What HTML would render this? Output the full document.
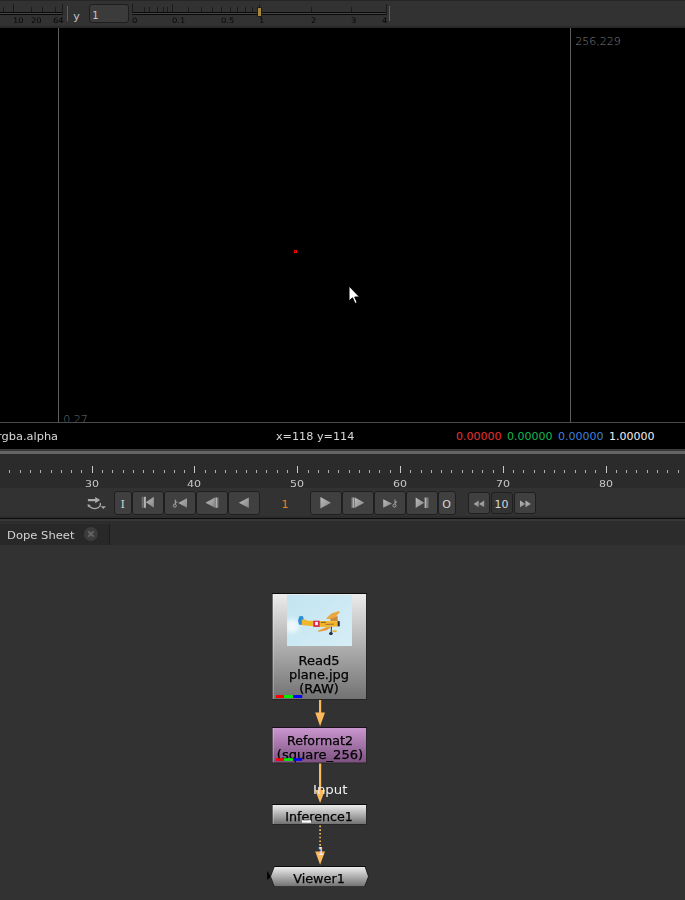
<!DOCTYPE html>
<html><head><meta charset="utf-8"><title>Nuke</title>
<style>
html,body{margin:0;padding:0;background:#323232;}
body{width:685px;height:900px;overflow:hidden;position:relative;font-family:"DejaVu Sans","Liberation Sans",sans-serif;color:#c8c8c8;}
.a{position:absolute;}
.t{position:absolute;white-space:nowrap;line-height:1;}
#top{left:0;top:0;width:685px;height:28px;background:#323232;}
#viewer{left:0;top:28px;width:685px;height:421px;background:#000;}
#tl{left:0;top:449px;width:685px;height:69px;background:#2b2b2b;}
#ng{left:0;top:545px;width:685px;height:355px;background:#323232;}
.btn{position:absolute;top:491px;height:24px;background:#404040;border:1px solid #1f1f1f;border-radius:3px;box-sizing:border-box;}
.tk{position:absolute;background:#1c1c1c;width:1px;}
</style></head><body>

<div class="a" id="top"></div>
<div class="a" style="left:0;top:0;width:685px;height:1px;background:#262626"></div>
<div class="a" style="left:0;top:26px;width:685px;height:2px;background:#282828"></div>
<div class="a" style="left:0px;top:12px;width:63px;height:3px;background:#444;border-top:1px solid #0a0a0a;border-bottom:1px solid #0a0a0a;box-sizing:border-box"></div>
<div class="tk" style="left:3px;top:7px;height:5px"></div>
<div class="tk" style="left:13px;top:4px;height:8px"></div>
<div class="tk" style="left:31px;top:7px;height:5px"></div>
<div class="tk" style="left:42px;top:7px;height:5px"></div>
<div class="tk" style="left:55px;top:7px;height:5px"></div>
<div class="tk" style="left:62px;top:4px;height:8px"></div>
<div class="tk" style="left:62px;top:4px;height:11px"></div>
<div class="t" style="left:13.0px;font-size:7.5px;color:#060606;top:16.6px;transform-origin:0 50%;transform:scaleX(1.12);">10</div>
<div class="t" style="left:31.0px;font-size:7.5px;color:#060606;top:16.6px;transform-origin:0 50%;transform:scaleX(1.12);">20</div>
<div class="t" style="left:52.6px;font-size:7.5px;color:#060606;top:16.6px;transform-origin:0 50%;transform:scaleX(1.12);">64</div>
<div class="a" style="left:67px;top:6px;width:1px;height:15px;background:#5e5e5e"></div>
<div class="t" style="left:73.2px;top:11.1px;font-size:11px;color:#c8c8c8">y</div>
<div class="a" style="left:89px;top:4px;width:40px;height:19px;background:#3b3b3b;border:1px solid #1e1e1e;border-radius:3px;box-sizing:border-box"></div>
<div class="t" style="left:92.3px;top:10.5px;font-size:10px;color:#c8c8c8">1</div>
<div class="a" style="left:132px;top:12px;width:255px;height:3px;background:#444;border-top:1px solid #0a0a0a;border-bottom:1px solid #0a0a0a;box-sizing:border-box"></div>
<div class="tk" style="left:132px;top:4px;height:8px"></div>
<div class="tk" style="left:172px;top:4px;height:8px"></div>
<div class="tk" style="left:259px;top:4px;height:8px"></div>
<div class="tk" style="left:386px;top:4px;height:11px"></div>
<div class="tk" style="left:144px;top:7px;height:5px"></div>
<div class="tk" style="left:149px;top:7px;height:5px"></div>
<div class="tk" style="left:157px;top:7px;height:5px"></div>
<div class="tk" style="left:163px;top:7px;height:5px"></div>
<div class="tk" style="left:167px;top:7px;height:5px"></div>
<div class="tk" style="left:188px;top:7px;height:5px"></div>
<div class="tk" style="left:201px;top:7px;height:5px"></div>
<div class="tk" style="left:212px;top:7px;height:5px"></div>
<div class="tk" style="left:221px;top:7px;height:5px"></div>
<div class="tk" style="left:230px;top:7px;height:5px"></div>
<div class="tk" style="left:237px;top:7px;height:5px"></div>
<div class="tk" style="left:245px;top:7px;height:5px"></div>
<div class="tk" style="left:252px;top:7px;height:5px"></div>
<div class="tk" style="left:311px;top:7px;height:5px"></div>
<div class="tk" style="left:351px;top:7px;height:5px"></div>
<div class="t" style="left:132.3px;font-size:7.5px;color:#060606;top:16.6px;transform-origin:0 50%;transform:scaleX(1.12);">0</div>
<div class="t" style="left:172.3px;font-size:7.5px;color:#060606;top:16.6px;transform-origin:0 50%;transform:scaleX(1.12);">0.1</div>
<div class="t" style="left:221.2px;font-size:7.5px;color:#060606;top:16.6px;transform-origin:0 50%;transform:scaleX(1.12);">0.5</div>
<div class="t" style="left:259.2px;font-size:7.5px;color:#060606;top:16.6px;transform-origin:0 50%;transform:scaleX(1.12);">1</div>
<div class="t" style="left:311.2px;font-size:7.5px;color:#060606;top:16.6px;transform-origin:0 50%;transform:scaleX(1.12);">2</div>
<div class="t" style="left:351.2px;font-size:7.5px;color:#060606;top:16.6px;transform-origin:0 50%;transform:scaleX(1.12);">3</div>
<div class="t" style="left:381.6px;font-size:7.5px;color:#060606;top:16.6px;transform-origin:0 50%;transform:scaleX(1.12);">4</div>
<div class="a" style="left:257px;top:7px;width:5px;height:10px;background:#a3873a;border:1px solid #1e1e1e;box-sizing:border-box"></div>
<div class="a" style="left:389px;top:6px;width:1px;height:15px;background:#5e5e5e"></div>
<div class="a" id="viewer"></div>
<div class="a" style="left:58px;top:28px;width:1px;height:394px;background:#5e5e5e"></div>
<div class="a" style="left:570px;top:28px;width:1px;height:394px;background:#5e5e5e"></div>
<div class="a" style="left:0;top:422px;width:685px;height:1px;background:#4a4a4a"></div>
<div class="t" style="left:575.3px;top:35.6px;font-size:11px;color:#808080;font-weight:200;font-family:'DejaVu Sans Light','DejaVu Sans',sans-serif">256,229</div>
<div class="t" style="left:63.2px;top:413.8px;font-size:11px;color:#767676;font-weight:200;font-family:'DejaVu Sans Light','DejaVu Sans',sans-serif;height:8.2px;overflow:hidden">0.27</div>
<div class="a" style="left:293.6px;top:249.6px;width:3.6px;height:3.6px;border:1.2px solid #f00;box-sizing:border-box"></div>
<svg class="a" style="left:346px;top:284px" width="16" height="22" viewBox="0 0 16 22"><path d="M3 2 L3 17 L6.5 13.8 L9 19.5 L11.2 18.5 L8.7 13 L13.5 13 Z" fill="#fff" stroke="#000" stroke-width="1"/></svg>
<div class="t" style="left:-3px;top:431px;font-size:11px;color:#d8d8d8;transform-origin:0 50%;transform:scaleX(1.035)">rgba.alpha</div>
<div class="t" style="left:276px;top:431px;font-size:11px;color:#d8d8d8;transform-origin:0 50%;transform:scaleX(1.017)">x=118 y=114</div>
<div class="t" style="left:456px;top:431px;font-size:11px;color:#e83232">0.00000</div>
<div class="t" style="left:507px;top:431px;font-size:11px;color:#14b850">0.00000</div>
<div class="t" style="left:558px;top:431px;font-size:11px;color:#3f80dc">0.00000</div>
<div class="t" style="left:609px;top:431px;font-size:11px;color:#f0f0f0">1.00000</div>
<div class="a" id="tl"></div>
<div class="a" style="left:0;top:449px;width:685px;height:2px;background:#3a3a3a"></div>
<div class="a" style="left:0;top:451px;width:685px;height:3px;background:#646464"></div>
<div class="a" style="left:0;top:488px;width:685px;height:30px;background:#323232"></div>
<div class="a" style="left:-1px;top:470px;width:1px;height:3px;background:#b0b0b0"></div>
<div class="a" style="left:9px;top:470px;width:1px;height:3px;background:#b0b0b0"></div>
<div class="a" style="left:20px;top:470px;width:1px;height:3px;background:#b0b0b0"></div>
<div class="a" style="left:30px;top:470px;width:1px;height:3px;background:#b0b0b0"></div>
<div class="a" style="left:40px;top:470px;width:1px;height:3px;background:#b0b0b0"></div>
<div class="a" style="left:51px;top:470px;width:1px;height:3px;background:#b0b0b0"></div>
<div class="a" style="left:61px;top:470px;width:1px;height:3px;background:#b0b0b0"></div>
<div class="a" style="left:71px;top:470px;width:1px;height:3px;background:#b0b0b0"></div>
<div class="a" style="left:81px;top:470px;width:1px;height:3px;background:#b0b0b0"></div>
<div class="a" style="left:92px;top:466px;width:1px;height:7px;background:#c8c8c8"></div>
<div class="t" style="left:77.2px;width:30px;text-align:center;top:479px;font-size:9.2px;color:#c8c8c8;transform:scaleX(1.2)">30</div>
<div class="a" style="left:102px;top:470px;width:1px;height:3px;background:#b0b0b0"></div>
<div class="a" style="left:112px;top:470px;width:1px;height:3px;background:#b0b0b0"></div>
<div class="a" style="left:123px;top:470px;width:1px;height:3px;background:#b0b0b0"></div>
<div class="a" style="left:133px;top:470px;width:1px;height:3px;background:#b0b0b0"></div>
<div class="a" style="left:143px;top:470px;width:1px;height:3px;background:#b0b0b0"></div>
<div class="a" style="left:153px;top:470px;width:1px;height:3px;background:#b0b0b0"></div>
<div class="a" style="left:164px;top:470px;width:1px;height:3px;background:#b0b0b0"></div>
<div class="a" style="left:174px;top:470px;width:1px;height:3px;background:#b0b0b0"></div>
<div class="a" style="left:184px;top:470px;width:1px;height:3px;background:#b0b0b0"></div>
<div class="a" style="left:194px;top:466px;width:1px;height:7px;background:#c8c8c8"></div>
<div class="t" style="left:179.2px;width:30px;text-align:center;top:479px;font-size:9.2px;color:#c8c8c8;transform:scaleX(1.2)">40</div>
<div class="a" style="left:205px;top:470px;width:1px;height:3px;background:#b0b0b0"></div>
<div class="a" style="left:215px;top:470px;width:1px;height:3px;background:#b0b0b0"></div>
<div class="a" style="left:225px;top:470px;width:1px;height:3px;background:#b0b0b0"></div>
<div class="a" style="left:236px;top:470px;width:1px;height:3px;background:#b0b0b0"></div>
<div class="a" style="left:246px;top:470px;width:1px;height:3px;background:#b0b0b0"></div>
<div class="a" style="left:256px;top:470px;width:1px;height:3px;background:#b0b0b0"></div>
<div class="a" style="left:266px;top:470px;width:1px;height:3px;background:#b0b0b0"></div>
<div class="a" style="left:277px;top:470px;width:1px;height:3px;background:#b0b0b0"></div>
<div class="a" style="left:287px;top:470px;width:1px;height:3px;background:#b0b0b0"></div>
<div class="a" style="left:297px;top:466px;width:1px;height:7px;background:#c8c8c8"></div>
<div class="t" style="left:282.2px;width:30px;text-align:center;top:479px;font-size:9.2px;color:#c8c8c8;transform:scaleX(1.2)">50</div>
<div class="a" style="left:308px;top:470px;width:1px;height:3px;background:#b0b0b0"></div>
<div class="a" style="left:318px;top:470px;width:1px;height:3px;background:#b0b0b0"></div>
<div class="a" style="left:328px;top:470px;width:1px;height:3px;background:#b0b0b0"></div>
<div class="a" style="left:338px;top:470px;width:1px;height:3px;background:#b0b0b0"></div>
<div class="a" style="left:349px;top:470px;width:1px;height:3px;background:#b0b0b0"></div>
<div class="a" style="left:359px;top:470px;width:1px;height:3px;background:#b0b0b0"></div>
<div class="a" style="left:369px;top:470px;width:1px;height:3px;background:#b0b0b0"></div>
<div class="a" style="left:379px;top:470px;width:1px;height:3px;background:#b0b0b0"></div>
<div class="a" style="left:390px;top:470px;width:1px;height:3px;background:#b0b0b0"></div>
<div class="a" style="left:400px;top:466px;width:1px;height:7px;background:#c8c8c8"></div>
<div class="t" style="left:385.2px;width:30px;text-align:center;top:479px;font-size:9.2px;color:#c8c8c8;transform:scaleX(1.2)">60</div>
<div class="a" style="left:410px;top:470px;width:1px;height:3px;background:#b0b0b0"></div>
<div class="a" style="left:421px;top:470px;width:1px;height:3px;background:#b0b0b0"></div>
<div class="a" style="left:431px;top:470px;width:1px;height:3px;background:#b0b0b0"></div>
<div class="a" style="left:441px;top:470px;width:1px;height:3px;background:#b0b0b0"></div>
<div class="a" style="left:451px;top:470px;width:1px;height:3px;background:#b0b0b0"></div>
<div class="a" style="left:462px;top:470px;width:1px;height:3px;background:#b0b0b0"></div>
<div class="a" style="left:472px;top:470px;width:1px;height:3px;background:#b0b0b0"></div>
<div class="a" style="left:482px;top:470px;width:1px;height:3px;background:#b0b0b0"></div>
<div class="a" style="left:493px;top:470px;width:1px;height:3px;background:#b0b0b0"></div>
<div class="a" style="left:503px;top:466px;width:1px;height:7px;background:#c8c8c8"></div>
<div class="t" style="left:488.2px;width:30px;text-align:center;top:479px;font-size:9.2px;color:#c8c8c8;transform:scaleX(1.2)">70</div>
<div class="a" style="left:513px;top:470px;width:1px;height:3px;background:#b0b0b0"></div>
<div class="a" style="left:523px;top:470px;width:1px;height:3px;background:#b0b0b0"></div>
<div class="a" style="left:534px;top:470px;width:1px;height:3px;background:#b0b0b0"></div>
<div class="a" style="left:544px;top:470px;width:1px;height:3px;background:#b0b0b0"></div>
<div class="a" style="left:554px;top:470px;width:1px;height:3px;background:#b0b0b0"></div>
<div class="a" style="left:564px;top:470px;width:1px;height:3px;background:#b0b0b0"></div>
<div class="a" style="left:575px;top:470px;width:1px;height:3px;background:#b0b0b0"></div>
<div class="a" style="left:585px;top:470px;width:1px;height:3px;background:#b0b0b0"></div>
<div class="a" style="left:595px;top:470px;width:1px;height:3px;background:#b0b0b0"></div>
<div class="a" style="left:606px;top:466px;width:1px;height:7px;background:#c8c8c8"></div>
<div class="t" style="left:591.2px;width:30px;text-align:center;top:479px;font-size:9.2px;color:#c8c8c8;transform:scaleX(1.2)">80</div>
<div class="a" style="left:616px;top:470px;width:1px;height:3px;background:#b0b0b0"></div>
<div class="a" style="left:626px;top:470px;width:1px;height:3px;background:#b0b0b0"></div>
<div class="a" style="left:636px;top:470px;width:1px;height:3px;background:#b0b0b0"></div>
<div class="a" style="left:647px;top:470px;width:1px;height:3px;background:#b0b0b0"></div>
<div class="a" style="left:657px;top:470px;width:1px;height:3px;background:#b0b0b0"></div>
<div class="a" style="left:667px;top:470px;width:1px;height:3px;background:#b0b0b0"></div>
<div class="a" style="left:678px;top:470px;width:1px;height:3px;background:#b0b0b0"></div>
<div class="btn" style="left:114px;width:18px" id="b_I"></div>
<div class="btn" style="left:132px;width:32px" id="b_first"></div>
<div class="btn" style="left:164px;width:32px" id="b_pkey"></div>
<div class="btn" style="left:196px;width:32px" id="b_pstep"></div>
<div class="btn" style="left:228px;width:32px" id="b_pplay"></div>
<div class="btn" style="left:310px;width:32px" id="b_play"></div>
<div class="btn" style="left:342px;width:32px" id="b_step"></div>
<div class="btn" style="left:374px;width:32px" id="b_nkey"></div>
<div class="btn" style="left:406px;width:32px" id="b_last"></div>
<div class="btn" style="left:438px;width:18px" id="b_O"></div>
<div class="btn" style="left:468px;width:22px;top:492px;height:22px;background:#404040" id="b_rw"></div>
<div class="btn" style="left:491px;width:22px;top:492px;height:22px;background:#333" id="b_10"></div>
<div class="btn" style="left:514px;width:22px;top:492px;height:22px;background:#404040" id="b_ff"></div>
<div class="a" style="left:0;top:516px;width:685px;height:2px;background:#2c2c2c"></div>
<div class="a" style="left:0;top:518px;width:685px;height:1px;background:#0c0c0c"></div>
<div class="a" style="left:0;top:519px;width:685px;height:2px;background:#373737"></div>
<div class="a" style="left:0;top:521px;width:685px;height:24px;background:#2c2c2c"></div>
<div class="a" style="left:0;top:523px;width:109px;height:22px;background:#282828;border-right:1px solid #1c1c1c;border-top:1px solid #303030;border-top-right-radius:3px;box-sizing:content-box"></div>
<div class="t" style="left:7.3px;top:530px;font-size:11px;color:#d4d4d4;transform-origin:0 50%;transform:scaleX(1.05)">Dope Sheet</div>
<svg class="a" style="left:83px;top:526px" width="16" height="16" viewBox="0 0 16 16"><circle cx="7.9" cy="8" r="7" fill="#3c3c3c"/><path d="M5.2 5.3 L10.6 10.7 M10.6 5.3 L5.2 10.7" stroke="#646464" stroke-width="1.9" fill="none"/></svg>
<div class="a" id="ng"></div>
<svg class="a" style="left:0;top:0" width="685" height="900" viewBox="0 0 685 900"><defs><linearGradient id="gl" x1="0" y1="0" x2="1" y2="1"><stop offset="0" stop-color="#bcbcbc"/><stop offset="1" stop-color="#868686"/></linearGradient></defs><path d="M87.9 499 L95.2 499 L95.2 497 L100.2 500.1 L95.2 503.2 L95.2 501.3 L87.9 501.3 Z" fill="#ababab"/><path d="M89 505.2 A5.8 4.4 0 0 0 100.3 503" stroke="#ababab" stroke-width="1.3" fill="none"/><path d="M87.5 504.3 L90.6 504.9 L88 507.6 Z" fill="#ababab"/><path d="M100.6 506.2 L106 506.2 L103.3 509.1 Z" fill="#a8a8a8"/><rect x="141.7" y="496.8" width="1.700000000000017" height="11.0" fill="#6c6c6c"/><rect x="143.8" y="496.8" width="2.0999999999999943" height="11.0" fill="#b4b4b4"/><path d="M145.9 502.3 L153.9 496.8 L153.9 507.8 Z" fill="url(#gl)"/><circle cx="174.8" cy="505.6" r="1.5" fill="none" stroke="#aaaaaa" stroke-width="1"/><path d="M175.3 504.1 L175.3 499.6 M175.3 502.1 L177.3 502.1" stroke="#aaaaaa" stroke-width="1" fill="none"/><path d="M178.2 503.0 L187 498.2 L187 507.8 Z" fill="url(#gl)"/><path d="M205.5 502.65 L214.9 497.5 L214.9 507.8 Z" fill="url(#gl)"/><rect x="215.4" y="497.5" width="2.1999999999999886" height="10.300000000000011" fill="#b2b2b2"/><rect x="217.6" y="497.5" width="1.0" height="10.300000000000011" fill="#707070"/><path d="M238.8 502.8 L248.8 497.5 L248.8 508.1 Z" fill="url(#gl)"/><path d="M320.4 497 L331 502.7 L320.4 508.4 Z" fill="url(#gl)"/><rect x="351.3" y="497.5" width="1.1999999999999886" height="10.300000000000011" fill="#707070"/><rect x="352.5" y="497.5" width="2.0" height="10.300000000000011" fill="#b2b2b2"/><path d="M355 497.5 L364.3 502.65 L355 507.8 Z" fill="url(#gl)"/><path d="M383.2 499.2 L392 503.5 L383.2 507.8 Z" fill="url(#gl)"/><circle cx="394.5" cy="505.6" r="1.5" fill="none" stroke="#aaaaaa" stroke-width="1"/><path d="M395 504.1 L395 499.6 M395 502.1 L397 502.1" stroke="#aaaaaa" stroke-width="1" fill="none"/><path d="M415.7 497.5 L424.2 502.75 L415.7 508 Z" fill="url(#gl)"/><rect x="424.6" y="497.5" width="2.0" height="10.5" fill="#b2b2b2"/><rect x="427" y="497.5" width="1.5" height="10.5" fill="#7a7a7a"/><path d="M473.7 503.9 L478.7 500.6 L478.7 507.2 Z" fill="url(#gl)"/><path d="M479 503.9 L484.2 500.6 L484.2 507.2 Z" fill="url(#gl)"/><path d="M520 500.6 L525.2 503.9 L520 507.2 Z" fill="url(#gl)"/><path d="M525.5 500.6 L531 503.9 L525.5 507.2 Z" fill="url(#gl)"/></svg>
<div class="t" style="left:120.6px;top:499.2px;font-size:11.5px;color:#d0d0d0;font-family:'DejaVu Serif','Liberation Serif',serif">I</div>
<div class="t" style="left:442.3px;top:499px;font-size:11px;color:#d8d8d8">O</div>
<div class="t" style="left:494.5px;top:498.5px;font-size:11px;color:#d8d8d8">10</div>
<div class="t" style="left:281.5px;top:498.5px;font-size:11px;color:#e8821e">1</div>
<svg class="a" style="left:0;top:0" width="685" height="900" viewBox="0 0 685 900"><defs>
<linearGradient id="gg" x1="0" y1="0" x2="0" y2="1"><stop offset="0" stop-color="#ececec"/><stop offset="1" stop-color="#727272"/></linearGradient>
<linearGradient id="gp" x1="0" y1="0" x2="0" y2="1"><stop offset="0" stop-color="#ca97ce"/><stop offset="1" stop-color="#7c5180"/></linearGradient>
<linearGradient id="sky" x1="0" y1="0" x2="1" y2="1"><stop offset="0" stop-color="#c2e4f1"/><stop offset="1" stop-color="#d6eef6"/></linearGradient>
<filter id="bl" x="-20%" y="-20%" width="140%" height="140%"><feGaussianBlur stdDeviation="0.45"/></filter>
<filter id="bl2" x="-50%" y="-50%" width="200%" height="200%"><feGaussianBlur stdDeviation="2.2"/></filter>
</defs><rect x="272" y="593" width="95" height="107" fill="#272727"/><rect x="272" y="593" width="95" height="1" fill="#0c0c0c"/><rect x="272.7" y="594" width="93.3" height="105" fill="url(#gg)"/><rect x="272.7" y="594" width="1" height="105" fill="#fff" opacity="0.35"/><rect x="287" y="595" width="65" height="51" fill="url(#sky)"/><clipPath id="tc"><rect x="287" y="595" width="65" height="51"/></clipPath><g clip-path="url(#tc)"><ellipse cx="292" cy="626" rx="7" ry="7" fill="#fff" opacity="0.7" filter="url(#bl2)"/><g filter="url(#bl)"><path d="M299.3 616.3 L302.8 615.9 L303.6 618.6 L302 625 L298.9 624.5 L298.1 620.4 Z" fill="#2b8edb"/><path d="M301.8 619.8 L305 619.4 L307.4 620.7 L338 621.2 L339 623.5 L338 626.4 L322 627 L308 625.7 L301.8 625 Z" fill="#f1b62a"/><rect x="313.3" y="620.7" width="6.4" height="6.2" fill="#d42c58"/><rect x="315.2" y="621.9" width="2.6" height="3.2" fill="#fff"/><path d="M330.2 617.6 L337.5 616 L337.8 621 L330.5 621 Z" fill="#c98a3a"/><path d="M326.1 618.6 L331.4 613.4 L339 611 L339.8 612.3 L334.9 617.4 L327.9 619.3 Z" fill="#eba640"/><path d="M317.4 630.9 L326.1 627.2 L332 626.6 L326.7 630.3 L319.1 631.8 Z" fill="#e59a3a"/><path d="M337.7 621 L339.8 621.2 L339.8 626.2 L337.7 626.4 Z" fill="#2a2a48"/><path d="M331.4 626.8 L331.2 633" stroke="#2a2a48" stroke-width="1"/><ellipse cx="330.9" cy="633.6" rx="1.9" ry="1.5" fill="#25254a"/><rect x="332.6" y="630.4" width="4" height="1.7" fill="#e8b020"/><path d="M325.5 624.4 L334 624.2" stroke="#9a5a38" stroke-width="0.8"/><path d="M321 622.5 L326 622.3" stroke="#4a3a30" stroke-width="0.7"/></g></g><rect x="319" y="700" width="2.2" height="14" fill="#fab95c"/><path d="M315.2 712.6 L325 712.6 L320.1 726.2 Z" fill="#fab95c"/><rect x="272" y="727" width="95" height="36.5" fill="#272727"/><rect x="272" y="727" width="95" height="1" fill="#1c101c"/><rect x="272.7" y="728" width="93.3" height="34.5" fill="url(#gp)"/><rect x="272.7" y="728" width="1" height="34.5" fill="#fff" opacity="0.35"/><rect x="319" y="763.5" width="2.2" height="28" fill="#fab95c"/><path d="M315.2 790 L325 790 L320.1 803 Z" fill="#fab95c"/><rect x="272" y="804" width="95" height="21" fill="#272727"/><rect x="272" y="804" width="95" height="1" fill="#0c0c0c"/><rect x="272.7" y="805" width="93.3" height="19" fill="url(#gg)"/><rect x="272.7" y="805" width="1" height="19" fill="#fff" opacity="0.35"/><path d="M320.1 825.6 L320.1 852" stroke="#fab95c" stroke-width="1.7" stroke-dasharray="1.6 2.1" fill="none"/><path d="M315.2 851.4 L325 851.4 L320.1 864.8 Z" fill="#fab95c"/><path d="M267.2 871.1 L270.9 876.4 L267.2 880 Z" fill="#000"/><path d="M274 866 L365.2 866 L369 876.4 L365 887 L274 887 L270 876.4 Z" fill="#222"/><path d="M274 866 L365.2 866 L365.5 867 L274 867 Z" fill="#0c0c0c"/><path d="M274.6 867 L364.7 867 L368 876.4 L364.3 886.3 L274.6 886.3 L271 876.4 Z" fill="url(#gg)"/></svg>
<div class="t" style="color:#000;-webkit-text-stroke:0.25px #000;font-size:12px;text-align:center;width:120px;transform-origin:50% 50%;left:259.3px;top:655px;transform:scaleX(1.085)">Read5</div>
<div class="t" style="color:#000;-webkit-text-stroke:0.25px #000;font-size:12px;text-align:center;width:120px;transform-origin:50% 50%;left:259.3px;top:669px;transform:scaleX(1.075)">plane.jpg</div>
<div class="t" style="color:#000;-webkit-text-stroke:0.25px #000;font-size:12px;text-align:center;width:120px;transform-origin:50% 50%;left:259.3px;top:683px;transform:scaleX(1.075)">(RAW)</div>
<div class="t" style="color:#000;-webkit-text-stroke:0.25px #000;font-size:12px;text-align:center;width:120px;transform-origin:50% 50%;left:260.1px;top:735px;transform:scaleX(1.05)">Reformat2</div>
<div class="t" style="color:#000;-webkit-text-stroke:0.25px #000;font-size:12px;text-align:center;width:120px;transform-origin:50% 50%;left:260.1px;top:749px;transform:scaleX(1.09)">(square_256)</div>
<div class="t" style="color:#000;-webkit-text-stroke:0.25px #000;font-size:12px;text-align:center;width:120px;transform-origin:50% 50%;left:259.3px;top:811px;transform:scaleX(1.055)">Inference1</div>
<div class="t" style="color:#000;-webkit-text-stroke:0.25px #000;font-size:12px;text-align:center;width:120px;transform-origin:50% 50%;left:259.3px;top:873px;transform:scaleX(1.067)">Viewer1</div>
<svg class="a" style="left:0;top:0" width="685" height="900" viewBox="0 0 685 900"><rect x="276" y="695" width="8" height="3" fill="#f00"/><rect x="284" y="695" width="9.2" height="3" fill="#0e0"/><rect x="293.2" y="695" width="9" height="3" fill="#00f"/><rect x="276" y="758.2" width="8" height="2.6" fill="#f00"/><rect x="284" y="758.2" width="9.2" height="2.6" fill="#0e0"/><rect x="293.2" y="758.2" width="9" height="2.6" fill="#00f"/><rect x="302" y="820.3" width="9" height="2.4" fill="#fff"/></svg>
<div class="t" style="left:313.2px;top:784px;font-size:12px;color:#f0f0f0;transform-origin:0 50%;transform:scaleX(1.11)">Input</div>
<div class="t" style="left:317.5px;top:846px;font-size:11px;color:#f0f0f0">1</div>
</body></html>
